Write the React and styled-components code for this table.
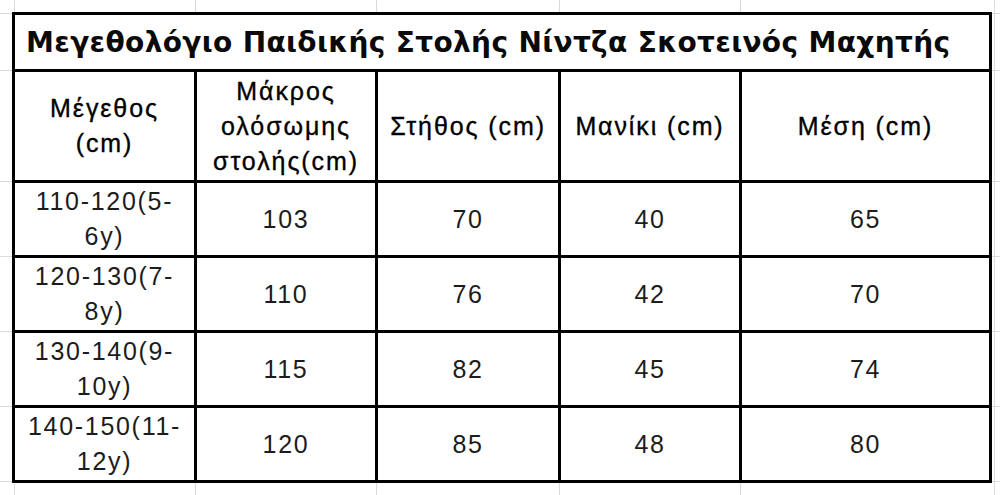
import React from "react";
import styled, { createGlobalStyle } from "styled-components";

const GlobalStyle = createGlobalStyle`
    html, body {
        margin: 0;
        padding: 0;
        background: #ffffff;
    }
`

// faint spreadsheet gridlines behind the table
const StyledSheet = styled.div`
    width: 1000px;
    height: 495px;
    overflow: hidden;
    box-sizing: border-box;
    padding: 12px 0 0 12px;
    background-color: #ffffff;
    background-image:
        linear-gradient(to right,
            transparent 14px, #dadada 14px, #dadada 15px,
            transparent 15px, transparent 195px, #dadada 195px, #dadada 196px,
            transparent 196px, transparent 376px, #dadada 376px, #dadada 377px,
            transparent 377px, transparent 559px, #dadada 559px, #dadada 560px,
            transparent 560px, transparent 740px, #dadada 740px, #dadada 741px,
            transparent 741px, transparent 994px, #dadada 994px, #dadada 995px,
            transparent 995px),
        linear-gradient(to bottom,
            transparent 13px, #dadada 13px, #dadada 14px,
            transparent 14px, transparent 70px, #dadada 70px, #dadada 71px,
            transparent 71px, transparent 181px, #dadada 181px, #dadada 182px,
            transparent 182px, transparent 256px, #dadada 256px, #dadada 257px,
            transparent 257px, transparent 331px, #dadada 331px, #dadada 332px,
            transparent 332px, transparent 406px, #dadada 406px, #dadada 407px,
            transparent 407px, transparent 481px, #dadada 481px, #dadada 482px,
            transparent 482px);
`

const StyledTable = styled.div`
    display: grid;
    grid-template-columns: 179px 178px 180px 178px 247px;
    grid-template-rows: 54px 108px repeat(4, 72px);
    gap: 3px;
    padding: 3px;
    width: max-content;
    background-color: #000000;
`

const StyledTitle = styled.div`
    grid-column: 1 / -1;
    background-color: #ffffff;
    display: flex;
    align-items: center;
    padding-left: 11px;
    font-family: "DejaVu Sans", "Noto Sans", sans-serif;
    font-weight: 700;
    font-size: 28px;
    letter-spacing: 0.35px;
    color: #0a0a0a;
    white-space: nowrap;
`

const StyledCell = styled.div`
    background-color: #ffffff;
    display: flex;
    align-items: center;
    justify-content: center;
    text-align: center;
    font-family: "Liberation Sans", Arial, sans-serif;
    font-size: 25px;
    line-height: 35px;
    letter-spacing: ${props => props.$head ? '1.9px' : '1.7px'};
    color: ${props => props.$head ? '#000000' : '#1c1c1c'};
    -webkit-text-stroke: ${props => props.$head ? '0.35px #000' : '0'};
    white-space: pre-line;
`

const headers = [
    "Μέγεθος\n(cm)",
    "Μάκρος\nολόσωμης\nστολής(cm)",
    "Στήθος (cm)",
    "Μανίκι (cm)",
    "Μέση (cm)",
];

const rows = [
    ["110-120(5-\n6y)", "103", "70", "40", "65"],
    ["120-130(7-\n8y)", "110", "76", "42", "70"],
    ["130-140(9-\n10y)", "115", "82", "45", "74"],
    ["140-150(11-\n12y)", "120", "85", "48", "80"],
];

const App = () => {
    return (
        <>
            <GlobalStyle />
            <StyledSheet>
                <StyledTable>
                    <StyledTitle>Μεγεθολόγιο Παιδικής Στολής Νίντζα Σκοτεινός Μαχητής</StyledTitle>
                    {headers.map(h => (
                        <StyledCell $head key={h}>{h}</StyledCell>
                    ))}
                    {rows.map(row => row.map((value, i) => (
                        <StyledCell key={row[0] + i}>{value}</StyledCell>
                    )))}
                </StyledTable>
            </StyledSheet>
        </>
    )
}

export default App;
